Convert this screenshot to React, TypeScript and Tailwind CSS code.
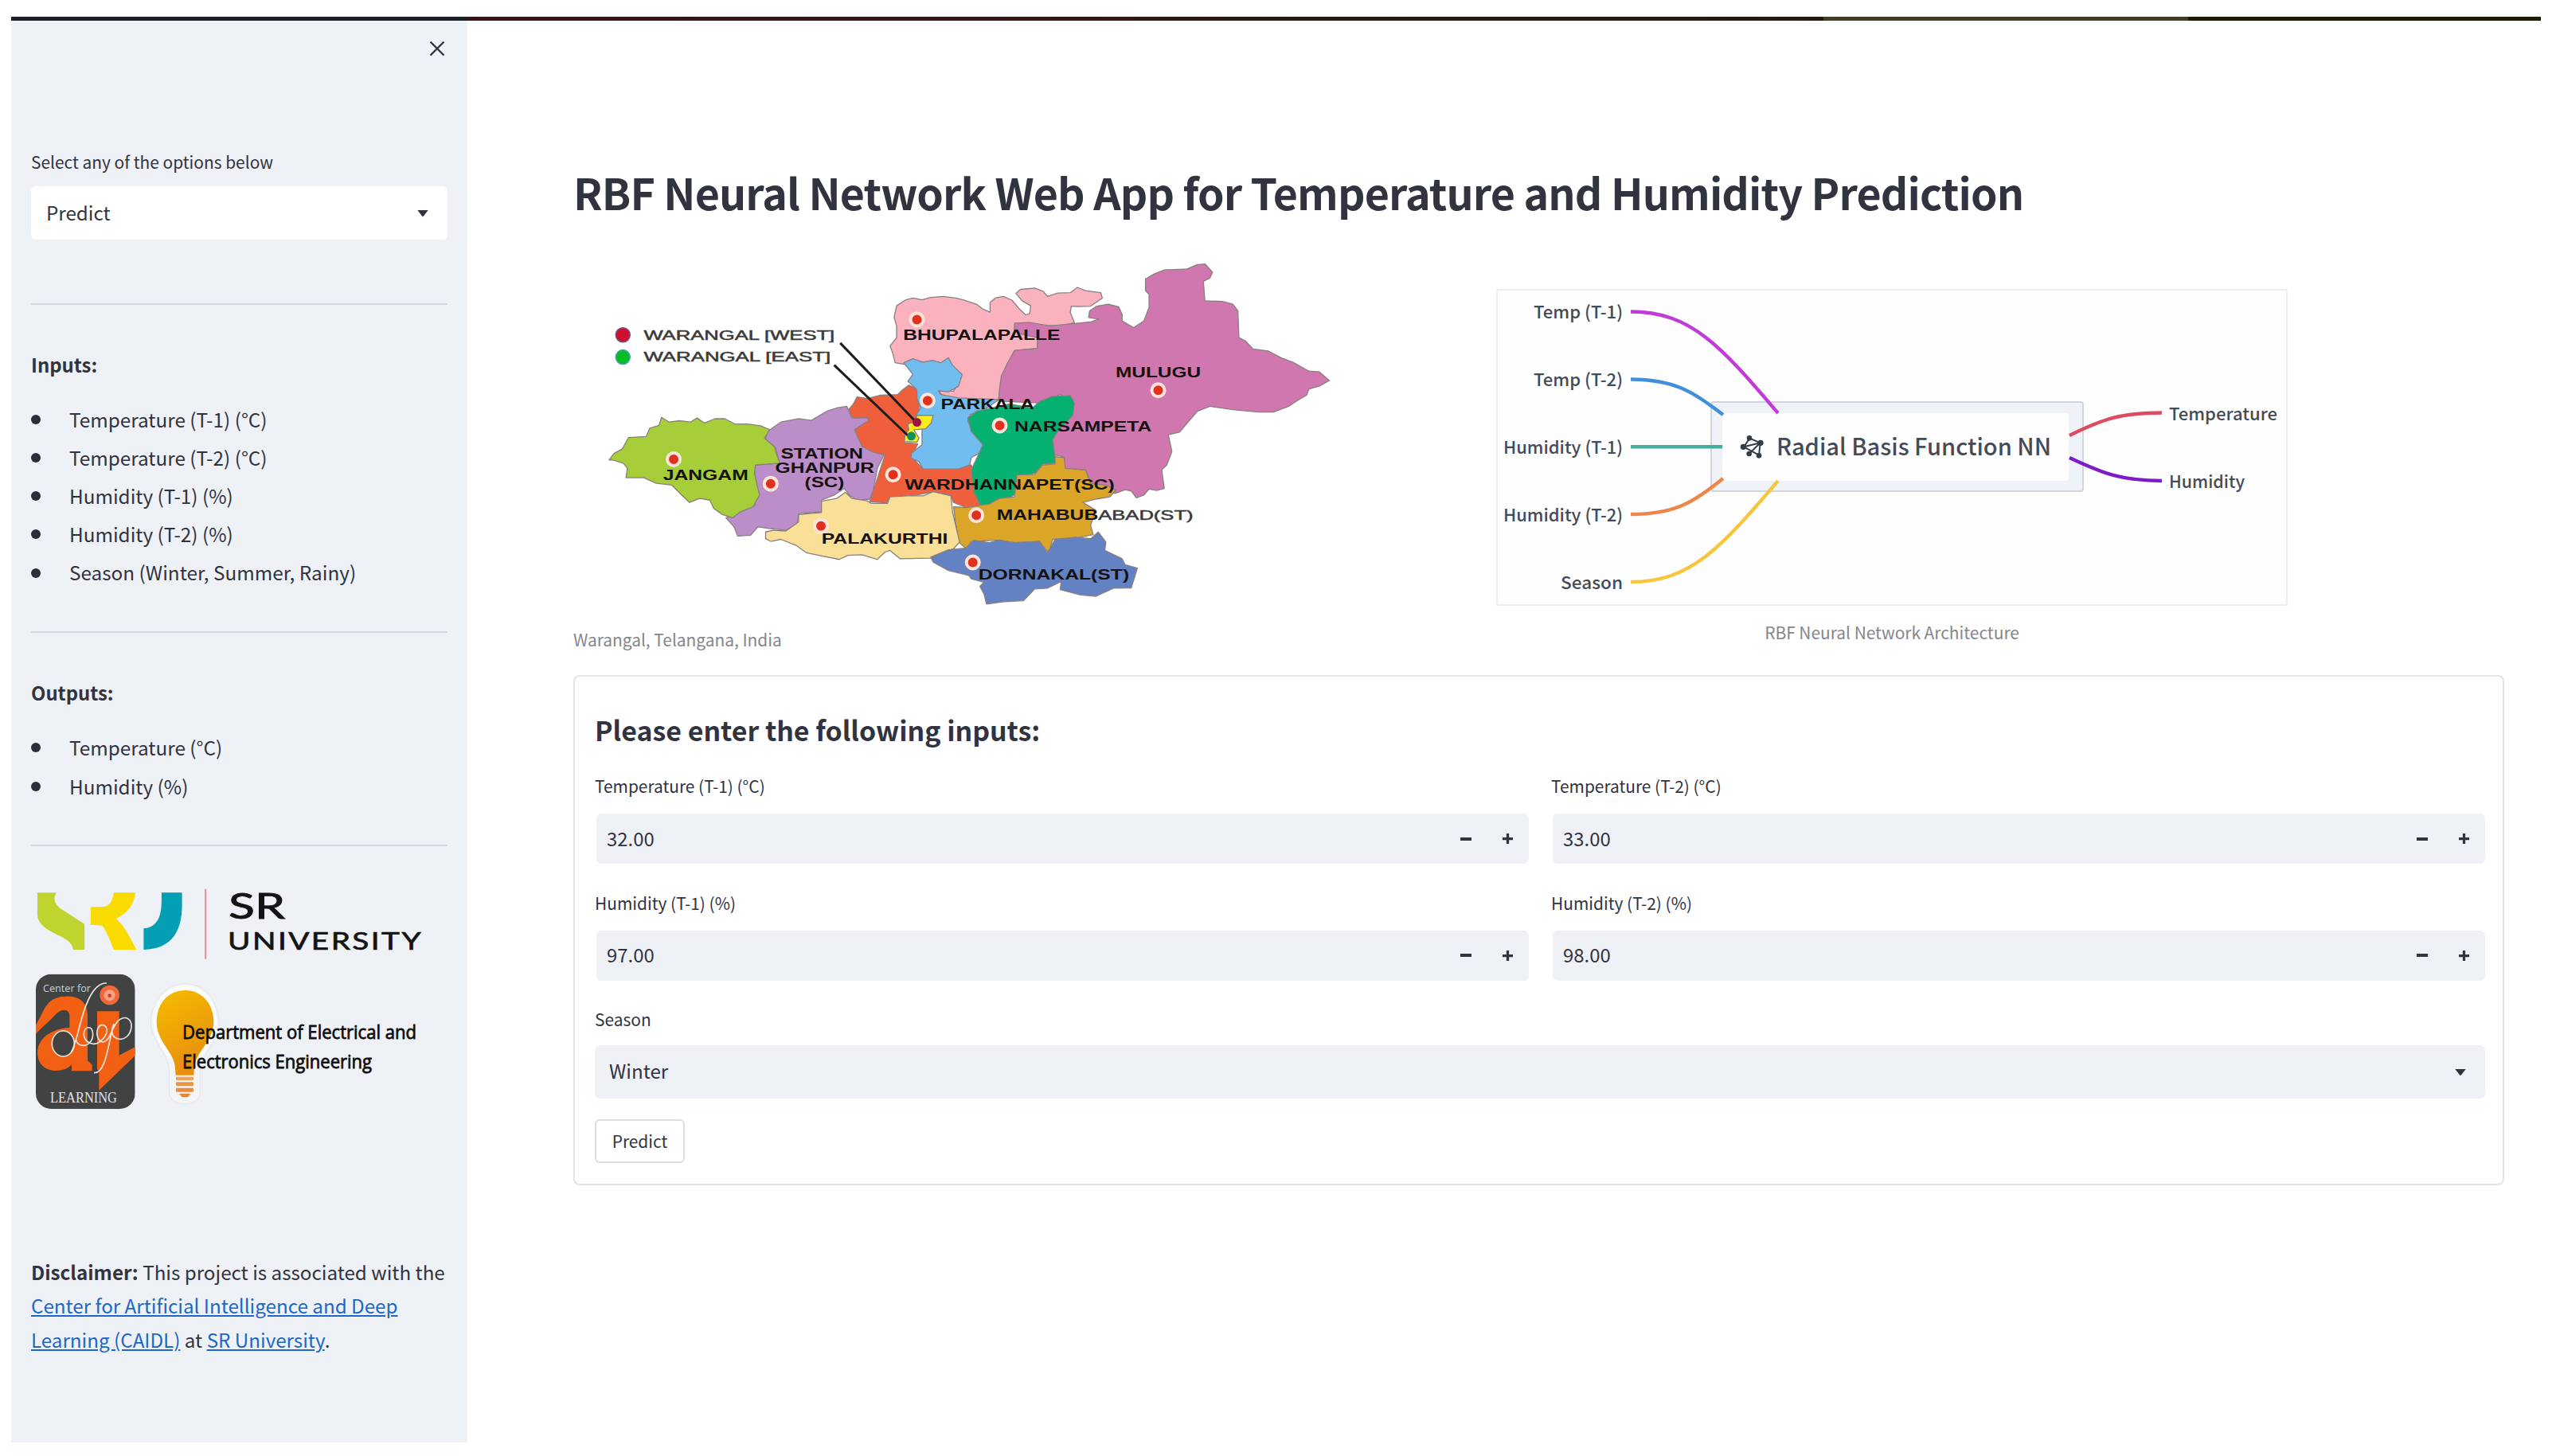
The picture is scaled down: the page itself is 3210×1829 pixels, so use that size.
import { ReactNode } from "react";

const inputs = [
  "Temperature (T-1) (°C)",
  "Temperature (T-2) (°C)",
  "Humidity (T-1) (%)",
  "Humidity (T-2) (%)",
  "Season (Winter, Summer, Rainy)",
];

const outputs = ["Temperature (°C)", "Humidity (%)"];

const fields = [
  { label: "Temperature (T-1) (°C)", value: "32.00" },
  { label: "Temperature (T-2) (°C)", value: "33.00" },
  { label: "Humidity (T-1) (%)", value: "97.00" },
  { label: "Humidity (T-2) (%)", value: "98.00" },
];

const regions = [
  {
    name: "bhupalapalle",
    fill: "#fab2bf",
    points:
      "685,468 700,462 718,467 735,460 760,457 785,462 800,468 825,480 838,495 852,504 852,475 862,462 878,457 895,468 910,495 922,512 930,508 932,485 915,470 903,448 912,436 940,432 957,442 965,457 985,447 1010,446 1024,430 1040,440 1070,446 1073,462 1050,486 1025,487 1012,486 1010,505 1018,535 1000,543 945,545 930,540 900,550 945,570 947,612 905,618 890,655 884,700 872,740 868,765 800,765 760,755 750,740 780,740 795,700 700,670 685,660 665,655 660,625 655,605 668,580 668,545 663,520 668,485",
  },
  {
    name: "mulugu",
    fill: "#cf77ae",
    points:
      "1158,405 1175,390 1195,378 1240,375 1260,362 1275,360 1290,385 1285,402 1272,412 1275,470 1310,472 1330,480 1340,500 1342,580 1355,590 1370,614 1400,620 1425,640 1450,655 1480,680 1500,682 1520,708 1500,725 1480,733 1475,752 1460,765 1440,785 1410,802 1380,802 1330,795 1285,785 1260,800 1240,835 1225,862 1203,870 1210,920 1200,960 1190,975 1195,1030 1180,1036 1165,1032 1155,1050 1140,1058 1130,1038 1118,1034 1098,1045 1050,1015 1040,975 1000,970 995,935 978,930 975,880 1010,810 1015,770 990,750 950,775 870,770 870,740 874,695 885,660 900,618 945,612 945,580 915,570 900,560 900,537 930,535 970,545 1050,533 1066,525 1046,520 1048,500 1062,486 1085,480 1105,488 1112,510 1112,530 1125,542 1135,550 1155,530 1165,490 1165,450 1158,440",
  },
  {
    name: "wardhannapet",
    fill: "#f05f3c",
    points:
      "678,738 692,722 712,735 712,815 690,860 683,893 710,897 697,935 720,972 815,960 835,1080 805,1087 780,1072 775,1050 740,1040 690,1055 655,1055 648,1073 615,1070 630,1000 645,930 620,922 600,910 583,870 588,850 612,825 608,818 585,822 570,800 582,780 590,757 610,762 635,752 670,750",
  },
  {
    name: "parkala",
    fill: "#72bdf0",
    points:
      "682,655 700,643 720,653 738,648 755,655 770,640 778,662 797,690 790,725 770,742 750,738 755,750 790,760 870,765 840,795 812,810 808,830 818,855 838,900 830,925 815,938 812,960 790,972 720,972 712,950 697,940 697,925 718,900 718,850 705,815 715,790 708,760 708,735 690,710 700,690",
  },
  {
    name: "station-ghanpur",
    fill: "#bb8ec9",
    points:
      "412,862 440,832 475,822 500,827 530,800 550,790 570,785 580,820 612,820 612,828 585,855 600,905 622,922 643,930 630,970 622,1035 615,1062 590,1065 575,1050 565,1030 545,1050 520,1065 520,1100 475,1105 472,1140 450,1155 420,1150 395,1145 380,1170 355,1172 348,1145 332,1118 390,1080 388,960 437,955 430,910 410,885",
  },
  {
    name: "jangam",
    fill: "#a6ce38",
    points:
      "102,945 112,925 128,912 140,878 175,875 182,850 200,842 205,818 220,832 240,828 262,832 275,820 290,835 310,822 330,822 350,838 375,838 400,843 418,855 408,880 427,905 432,930 438,955 390,960 388,985 398,1050 385,1085 360,1100 345,1118 325,1108 308,1090 300,1065 280,1060 260,1072 245,1050 225,1020 195,1015 170,998 135,998 138,970 130,955 108,945",
  },
  {
    name: "narsampeta",
    fill: "#04b171",
    points:
      "808,820 825,800 845,793 890,778 935,790 950,770 975,755 1010,753 1018,775 1015,812 985,860 975,885 982,955 955,958 940,985 905,995 910,1040 885,1062 870,1060 850,1077 832,1078 820,1040 815,975 838,900 815,860",
  },
  {
    name: "mahabubabad",
    fill: "#dba528",
    points:
      "835,1080 850,1077 870,1060 900,1055 905,990 940,988 955,960 980,957 980,935 998,938 1000,970 1040,975 1050,1015 1080,1020 1100,1035 1088,1055 1060,1062 1035,1072 1060,1095 1050,1140 1055,1168 1020,1178 975,1182 968,1222 955,1200 950,1188 900,1192 870,1184 815,1188 805,1210 790,1190 785,1140 780,1085 805,1087",
  },
  {
    name: "palakurthi",
    fill: "#f9e096",
    points:
      "410,1160 425,1155 450,1157 475,1130 475,1108 520,1102 520,1068 550,1060 567,1042 580,1060 610,1067 618,1075 650,1075 655,1055 690,1052 720,1052 740,1040 775,1052 778,1100 792,1190 780,1210 735,1238 675,1240 655,1215 645,1220 630,1242 600,1228 572,1230 555,1242 490,1222 470,1200 440,1182 420,1188 410,1180",
  },
  {
    name: "dornakal",
    fill: "#6382c4",
    points:
      "735,1235 770,1213 805,1208 820,1185 850,1192 870,1184 900,1192 948,1188 965,1222 980,1182 1020,1176 1050,1180 1065,1160 1080,1190 1078,1215 1112,1240 1118,1258 1142,1268 1130,1327 1095,1328 1060,1352 1030,1348 990,1332 992,1308 965,1328 940,1330 918,1365 880,1368 845,1375 840,1345 832,1322 840,1310 815,1300 810,1290 770,1275 740,1250",
  },
  {
    name: "warangal",
    fill: "#f8ee1c",
    points:
      "708,812 740,812 736,835 725,852 702,855 712,880 708,892 683,890 685,870 692,855 690,838 705,830",
  },
];

// x, y and width are in the same units as the region outlines
const mapLabels = [
  { text: "WARANGAL [WEST]", x: 170, y: 586, w: 376, light: true },
  { text: "WARANGAL [EAST]", x: 170, y: 652, w: 368, light: true },
  { text: "BHUPALAPALLE", x: 681, y: 586, w: 309 },
  { text: "MULUGU", x: 1099, y: 698, w: 168 },
  { text: "PARKALA", x: 755, y: 793, w: 184 },
  { text: "NARSAMPETA", x: 900, y: 859, w: 270 },
  { text: "STATION", x: 440, y: 942, w: 162 },
  { text: "GHANPUR", x: 429, y: 984, w: 195 },
  { text: "(SC)", x: 487, y: 1027, w: 78 },
  { text: "JANGAM", x: 208, y: 1006, w: 168 },
  { text: "WARDHANNAPET(SC)", x: 684, y: 1034, w: 413 },
  { text: "MAHABUB", x: 865, y: 1124, w: 200 },
  { text: "ABAD(ST)", x: 1065, y: 1124, w: 187, light: true },
  { text: "PALAKURTHI", x: 520, y: 1195, w: 249 },
  { text: "DORNAKAL(ST)", x: 829, y: 1303, w: 297 },
];

const mapPins = [
  [708, 526],
  [1183, 737],
  [729, 768],
  [871, 842],
  [229, 943],
  [420, 1016],
  [661, 989],
  [825, 1110],
  [519, 1142],
  [818, 1251],
];

const mx = (x: number) => x * 0.6378 - 20;
const my = (y: number) => y * 0.4209 - 145;

const WarangalMap = () => (
  <svg
    className="block h-[450px] w-[980px]"
    viewBox="0 0 980 450"
    fontFamily="Liberation Sans, Arial, sans-serif"
  >
    <g transform="translate(-20 -145) scale(0.6378 0.4209)">
      {regions.map((region) => (
        <polygon
          key={region.name}
          points={region.points}
          fill={region.fill}
          stroke="#8a7f80"
          strokeWidth="1.3"
          strokeLinejoin="round"
          vectorEffect="non-scaling-stroke"
        />
      ))}
    </g>
    <g stroke="#1d1d1d" strokeWidth="3">
      <line x1={mx(557)} y1={my(596)} x2={mx(705)} y2={my(830)} />
      <line x1={mx(545)} y1={my(662)} x2={mx(690)} y2={my(872)} />
    </g>
    <circle cx={mx(129)} cy={my(572)} r="9" fill="#cf1029" stroke="#7a4a90" strokeWidth="1.5" />
    <circle cx={mx(129)} cy={my(638)} r="9" fill="#06bd28" stroke="#3fa7a0" strokeWidth="1.5" />
    <circle cx={mx(708)} cy={my(833)} r="5.5" fill="#a01440" />
    <circle cx={mx(697)} cy={my(874)} r="5.5" fill="#138f5c" />
    {mapPins.map(([x, y]) => (
      <circle
        key={x}
        cx={mx(x)}
        cy={my(y)}
        r="8"
        fill="#e0301e"
        stroke="#fde4da"
        strokeWidth="4"
      />
    ))}
    {mapLabels.map((label) => (
      <text
        key={label.text}
        x={mx(label.x)}
        y={my(label.y)}
        fontSize={label.light ? 16.5 : 17.5}
        fontWeight={label.light ? 400 : 700}
        fill={label.light ? "#3a3a3a" : "#17120f"}
        stroke={label.light ? "#3a3a3a" : "none"}
        strokeWidth="0.5"
        textLength={label.w * 0.6378}
        lengthAdjust="spacingAndGlyphs"
      >
        {label.text}
      </text>
    ))}
  </svg>
);

const NetworkDiagram = () => (
  <svg
    className="block h-[398px] w-[994px]"
    viewBox="0 0 994 398"
    fontFamily="Noto Sans CJK SC, Noto Sans, sans-serif"
    fontWeight="500"
    fill="#434b57"
  >
    <rect x="1" y="1" width="992" height="396" fill="#fefefe" stroke="#efeff0" strokeWidth="2" />
    <rect x="270" y="142" width="467" height="112" rx="3" fill="#eff3f7" stroke="#cfd6e0" strokeWidth="2" />
    <rect x="284" y="156" width="435" height="85" rx="4" fill="#fefefe" />
    <g fill="none" strokeWidth="4.4">
      <path d="M169 28.500C245 28.500 282 72 354 156" stroke="#c13bd6" />
      <path d="M169 113.500C225 113.500 248 130 285 158" stroke="#3f8fdc" />
      <path d="M169 198.200H284" stroke="#45ae9f" />
      <path d="M169 283C225 283 248 268 285 238" stroke="#ee8549" />
      <path d="M169 368C245 368 282 325 354 241" stroke="#f6c63c" />
      <path d="M720 184C765 162 785 156 836 155.500" stroke="#dc4d63" />
      <path d="M720 212C765 233 785 240.500 836 241" stroke="#7d1ccb" />
    </g>
    <g transform="translate(250 136) scale(0.3333)" fill="#333d4c" stroke="#333d4c" strokeWidth="6">
      <path
        d="M205 155L245 172L183 187ZM203 213L245 172L240 218L183 187M183 187L205 155"
        fill="none"
      />
      <circle cx="204" cy="154" r="7" />
      <circle cx="246" cy="172" r="8" />
      <circle cx="181" cy="187" r="8" />
      <circle cx="203" cy="213" r="7" />
      <circle cx="240" cy="220" r="7" />
    </g>
    <text x="352" y="208.500" fontSize="29" textLength="345" lengthAdjust="spacingAndGlyphs">
      Radial Basis Function NN
    </text>
    <g fontSize="22" textAnchor="end">
      <text x="159" y="37" textLength="112" lengthAdjust="spacingAndGlyphs">Temp (T-1)</text>
      <text x="159" y="122" textLength="112" lengthAdjust="spacingAndGlyphs">Temp (T-2)</text>
      <text x="159" y="207" textLength="150" lengthAdjust="spacingAndGlyphs">Humidity (T-1)</text>
      <text x="159" y="292" textLength="150" lengthAdjust="spacingAndGlyphs">Humidity (T-2)</text>
      <text x="159" y="377" textLength="78" lengthAdjust="spacingAndGlyphs">Season</text>
    </g>
    <g fontSize="22">
      <text x="845" y="165" textLength="136" lengthAdjust="spacingAndGlyphs">Temperature</text>
      <text x="845" y="250" textLength="95" lengthAdjust="spacingAndGlyphs">Humidity</text>
    </g>
  </svg>
);

const Logos = () => (
  <svg className="block h-[310px] w-[522px]" viewBox="0 0 522 310">
    <defs>
      <linearGradient id="bulb" x1="0" y1="0" x2="0.4" y2="1">
        <stop offset="0" stopColor="#f5bd00" />
        <stop offset="1" stopColor="#e88f0e" />
      </linearGradient>
      <clipPath id="badge">
        <rect x="45" y="44" width="374" height="508" rx="58" />
      </clipPath>
    </defs>

    {/* SR University */}
    <g transform="translate(-39 -30) scale(0.4082 0.3333)">
      <path
        d="M115 187H173C160 215 172 240 200 258L260 305V402H225C222 375 205 362 175 345C135 322 115 300 115 268Z"
        fill="#bfd42e"
      />
      <path
        d="M350 187H416C414 230 392 265 357 285C380 308 402 360 420 402H350C340 370 328 335 316 313Q310 308 279 308V241H315C338 241 347 215 350 187Z"
        fill="#fadb00"
      />
      <path
        d="M497 187H560V235C560 330 530 400 442 402V322C485 318 497 275 497 215Z"
        fill="#049fb4"
      />
      <rect x="630" y="173" width="5" height="264" fill="#f08a90" />
    </g>
    <g fill="#141414" fontFamily="Lato, Open Sans, sans-serif">
      <text x="248" y="65" fontSize="45" textLength="71" lengthAdjust="spacingAndGlyphs" stroke="#141414" strokeWidth="0.9">
        SR
      </text>
      <text
        x="247"
        y="104"
        fontSize="31"
        letterSpacing="2"
        textLength="245"
        lengthAdjust="spacingAndGlyphs"
        stroke="#141414"
        strokeWidth="0.7"
      >
        UNIVERSITY
      </text>
    </g>

    {/* Center for AI and Deep Learning */}
    <g transform="translate(-9 120) scale(0.3333)">
      <g clipPath="url(#badge)">
        <rect x="45" y="44" width="374" height="508" fill="#414242" />
        <path
          d="M45 235C75 190 80 130 155 128C210 126 238 150 240 200V370L257 385V409H180V385C150 420 60 420 52 350C45 290 100 250 172 245V205C172 170 140 175 120 195C95 225 60 250 45 270Z"
          fill="#f26013"
        />
        <path d="M276 184H359V350L420 318V350L283 482V405H276Z" fill="#f26013" />
        <circle cx="323" cy="123" r="37" fill="#f0683a" />
        <circle cx="323" cy="124" r="21" fill="#f4a184" />
        <circle cx="323" cy="125" r="7" fill="#d2432a" />
      </g>
      <ellipse cx="148" cy="306" rx="42" ry="48" fill="#414242" stroke="#e8e4e0" strokeWidth="5" />
      <path
        d="M312 78C255 75 225 180 210 240C200 280 190 320 178 338M196 290C205 330 262 315 260 270C258 235 228 240 226 268C225 300 262 320 290 296C325 265 315 232 292 236C268 242 270 300 300 300C325 295 330 245 355 220C385 195 410 215 404 250C395 300 335 300 332 262C330 245 335 240 340 232M335 248C318 300 310 420 264 416"
        fill="none"
        stroke="#e8e4e0"
        strokeWidth="5"
      />
    </g>
    <text x="15" y="157" fontSize="13" fill="#d0d0d0" fontFamily="Open Sans, sans-serif" textLength="60" lengthAdjust="spacingAndGlyphs">
      Center for
    </text>
    <text x="24" y="296" fontSize="19" fill="#e2e2e2" fontFamily="Liberation Serif, serif" textLength="84" lengthAdjust="spacingAndGlyphs">
      LEARNING
    </text>

    {/* Department of EEE */}
    <g transform="translate(-9 120) scale(0.3333)">
      <path
        d="M607 80C680 80 733 145 735 225C737 295 668 345 664 405V490C660 520 640 533 606 533C572 533 552 520 548 490V405C545 345 478 295 478 225C480 145 535 80 607 80Z"
        fill="#f3f5f7"
        stroke="#d9dde2"
        strokeWidth="2"
      />
      <path
        d="M607 88C675 88 725 145 727 225C728 270 690 320 668 360L545 360C520 320 486 270 487 225C488 145 540 88 607 88Z"
        fill="#fdfdfd"
      />
      <path
        d="M607 105C670 105 715 155 715 225C715 300 642 340 642 400L640 425H572L570 400C570 340 500 300 500 225C500 155 545 105 607 105Z"
        fill="url(#bulb)"
      />
      <rect x="573" y="431" width="66" height="13" rx="3" fill="#f2a257" />
      <rect x="573" y="451" width="66" height="15" rx="3" fill="#ee9440" />
      <rect x="573" y="473" width="66" height="15" rx="3" fill="#ec8c38" />
      <path d="M585 494H628L618 508H596Z" fill="#e8862e" />
    </g>
    <g fill="#0f0f0f" stroke="#0f0f0f" strokeWidth="0.8" fontSize="23.500" fontFamily="Open Sans, Noto Sans, sans-serif">
      <text x="190" y="216" textLength="294" lengthAdjust="spacingAndGlyphs">Department of Electrical and</text>
      <text x="190" y="253" textLength="238" lengthAdjust="spacingAndGlyphs">Electronics Engineering</text>
    </g>
  </svg>
);

const Caret = () => (
  <svg className="h-2 w-3.5" viewBox="0 0 15 9">
    <path d="M0 0H15L8.500 8.500Q7.500 9.300 6.500 8.500Z" fill="#31333f" />
  </svg>
);

const BulletList = ({ items }: { items: string[] }) => (
  <ul>
    {items.map((item) => (
      <li key={item} className="flex h-[48.2px] items-center text-[24.3px] leading-[48.2px]">
        <span className="mr-9 h-3 w-3 rounded-full bg-[#2b2d3a]" />
        {item}
      </li>
    ))}
  </ul>
);

const FieldLabel = ({ children }: { children: ReactNode }) => (
  <p className="text-[20.9px] leading-6">{children}</p>
);

const NumberField = ({ label, value }: { label: string; value: string }) => (
  <div className="h-[146.5px]">
    <FieldLabel>{label}</FieldLabel>
    <div className="ml-0.5 mt-[23px] flex h-[63px] items-center rounded-md bg-[#eef1f6] pl-[13px] pr-5">
      <span className="flex-1 pb-0.5 text-[23.9px] leading-[60px]">{value}</span>
      <span className="h-1 w-3.5 bg-[#31333f]" />
      <svg className="ml-[39px] h-[13px] w-[13px]" viewBox="0 0 14 14">
        <path d="M0 7H14M7 0V14" stroke="#31333f" strokeWidth="3.500" />
      </svg>
    </div>
  </div>
);

const Sidebar = () => (
  <aside className="h-[1786px] w-[573px] bg-[#eef1f6] px-[25px]">
    <div className="flex h-[165px] justify-end pr-[3px] pt-[25px]">
      <svg className="h-5 w-5" viewBox="0 0 20 20">
        <path d="M1.500 1.500L18.500 18.500M18.500 1.500L1.500 18.500" stroke="#31333f" strokeWidth="2.400" />
      </svg>
    </div>
    <FieldLabel>Select any of the options below</FieldLabel>
    <div className="mt-[19px] flex h-[67px] items-center justify-between rounded-md bg-white pl-[19px] pr-6 text-[24.2px]">
      <span>Predict</span>
      <Caret />
    </div>
    <hr className="mt-20 border-t-2 border-[#d5d8df]" />
    <p className="mt-[54px] text-[23.9px] font-bold leading-[42.7px]">Inputs:</p>
    <div className="mt-[23px]">
      <BulletList items={inputs} />
    </div>
    <hr className="mt-[49px] border-t-2 border-[#d5d8df]" />
    <p className="mt-[54px] text-[23.9px] font-bold leading-[42.7px]">Outputs:</p>
    <div className="mt-6">
      <BulletList items={outputs} />
    </div>
    <hr className="mt-[49px] border-t-2 border-[#d5d8df]" />
    <div className="mt-[26px]">
      <Logos />
    </div>
    <p className="mt-[178px] whitespace-nowrap text-[24.2px] leading-[42.7px]">
      <strong className="font-bold">Disclaimer:</strong> This project is associated with the
      <br />
      <a className="text-[#1b68c8] underline">
        Center for Artificial Intelligence and Deep
        <br />
        Learning (CAIDL)
      </a>{" "}
      at <a className="text-[#1b68c8] underline">SR University</a>.
    </p>
  </aside>
);

const App = () => {
  return (
    <div className="h-[1829px] w-[3210px] bg-white pl-3.5 pt-[21px] font-['Noto_Sans_CJK_SC','Noto_Sans',sans-serif] text-[#31333f]">
      {/* browser tab strip edge */}
      <div className="flex h-[5px] w-[3177px] border-b-2 border-white/45">
        <div className="-mb-0.5 w-[573px] bg-[#1d2027]" />
        <div className="-mb-0.5 w-[1703px] bg-linear-to-r from-[#3a1216] to-[#271b08]" />
        <div className="-mb-0.5 w-[458px] bg-[#413c22]" />
        <div className="-mb-0.5 flex-1 bg-[#1f1b02]" />
      </div>
      <div className="flex">
        <Sidebar />
        <main className="w-[2558px] pl-[133px] pt-[179px]">
          <h1 className="whitespace-nowrap text-[53.7px] font-bold leading-[72px] tracking-[-0.86px]">
            RBF Neural Network Web App for Temperature and Humidity Prediction
          </h1>
          <div className="mt-12 flex h-[523px]">
            <div className="w-[1159px]">
              <WarangalMap />
              <p className="mt-3.5 text-[20.9px] leading-7 text-[#85868d]">
                Warangal, Telangana, India
              </p>
            </div>
            <div className="w-[994px] pt-[38px]">
              <NetworkDiagram />
              <p className="mt-[19px] text-center text-[20.9px] leading-7 text-[#85868d]">
                RBF Neural Network Architecture
              </p>
            </div>
          </div>
          <div className="h-[641px] rounded-lg border-2 border-[#e2e3e7] pl-[25px] pr-[22px] pt-[42px]">
            <h3 className="text-[33.9px] font-bold leading-[50px]">
              Please enter the following inputs:
            </h3>
            <div className="mt-[33px] grid grid-cols-2 gap-x-7">
              {fields.map((field) => (
                <NumberField key={field.label} label={field.label} value={field.value} />
              ))}
            </div>
            <FieldLabel>Season</FieldLabel>
            <div className="mt-[21px] flex h-[67px] items-center justify-between rounded-md bg-[#eef1f6] pl-[18px] pr-6 text-[24.2px]">
              <span className="pb-0.5">Winter</span>
              <Caret />
            </div>
            <button className="mt-[26px] flex h-[55px] w-[113px] items-center justify-center rounded-md border-2 border-[#dcdde1] text-[20.9px]">
              Predict
            </button>
          </div>
        </main>
      </div>
    </div>
  );
};

export default App;
